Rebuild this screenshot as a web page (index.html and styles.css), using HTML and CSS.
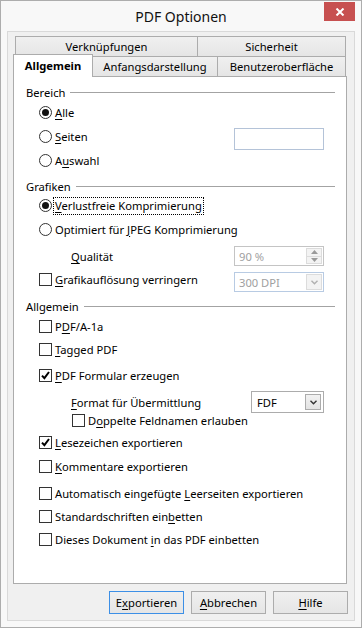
FILE: index.html
```html
<!DOCTYPE html>
<html lang="de">
<head>
	<meta charset="UTF-8">
	<title>PDF Optionen</title>
	<link rel="stylesheet" href="styles.css">
</head>
<body>
<div class="window">
	<div class="titlebar">
		<span class="title">PDF Optionen</span>
		<button class="close" type="button">
			<svg width="10" height="8" viewBox="0 0 10 8"><path d="M1.5 0.5L8.5 7.5M8.5 0.5L1.5 7.5" stroke="#fff" stroke-width="2"/></svg>
		</button>
	</div>

	<div class="client">
		<div class="tabrow back">
			<div class="tab w-verk">Verknüpfungen</div>
			<div class="tab w-sich">Sicherheit</div>
		</div>
		<div class="tabrow front">
			<div class="tab active w-allg">Allgemein</div>
			<div class="tab w-anf">Anfangsdarstellung</div>
			<div class="tab w-ben">Benutzeroberfläche</div>
		</div>

		<div class="panel">
			<!-- Bereich -->
			<div class="group first">Bereich</div>
			<div class="row ind"><span class="radio on"></span><span class="lbl"><u>A</u>lle</span></div>
			<div class="row ind"><span class="radio"></span><span class="lbl"><u>S</u>eiten</span><span class="field pages"></span></div>
			<div class="row ind"><span class="radio"></span><span class="lbl">A<u>u</u>swahl</span></div>

			<!-- Grafiken -->
			<div class="group">Grafiken</div>
			<div class="row h23 ind"><span class="radio on"></span><span class="lbl focus"><u>V</u>erlustfreie Komprimierung</span></div>
			<div class="row ind"><span class="radio"></span><span class="lbl">Optimiert für <u>J</u>PEG Komprimierung</span></div>
			<div class="row ind2 gap3">
				<span><u>Q</u>ualität</span>
				<span class="spin">
					<span class="val">90 %</span>
					<span class="spinbtns">
						<span class="sb"><svg width="7" height="4" viewBox="0 0 7 4"><path d="M0 4L3.5 0L7 4Z" fill="#9a9a9a"/></svg></span>
						<span class="sb"><svg width="7" height="4" viewBox="0 0 7 4"><path d="M0 0L3.5 4L7 0Z" fill="#9a9a9a"/></svg></span>
					</span>
				</span>
			</div>
			<div class="row ind gap2">
				<span class="check lift"></span><span class="lbl lift"><u>G</u>rafikauflösung verringern</span>
				<span class="combo disabled">
					<span class="val">300 DPI</span>
					<span class="drop"><svg width="7" height="5" viewBox="0 0 7 5"><path d="M0.5 0.8L3.5 3.8L6.5 0.8" stroke="#b0b0b0" stroke-width="1.4" fill="none"/></svg></span>
				</span>
			</div>

			<!-- Allgemein -->
			<div class="group gap4">Allgemein</div>
			<div class="row ind"><span class="check"></span><span class="lbl">P<u>D</u>F/A-1a</span></div>
			<div class="row h23 ind"><span class="check"></span><span class="lbl"><u>T</u>agged PDF</span></div>
			<div class="row ind gap2">
				<span class="check"><svg width="11" height="11" viewBox="0 0 11 11"><path d="M2 5.6L4.4 8.2L9 2" stroke="#000" stroke-width="2" fill="none"/></svg></span>
				<span class="lbl"><u>P</u>DF Formular erzeugen</span>
			</div>
			<div class="row ind2 gap3">
				<span><u>F</u>ormat für Übermittlung</span>
				<span class="combo fdf">
					<span class="val">FDF</span>
					<span class="drop"><svg width="7" height="5" viewBox="0 0 7 5"><path d="M0.5 0.8L3.5 3.8L6.5 0.8" stroke="#333" stroke-width="1.4" fill="none"/></svg></span>
				</span>
			</div>
			<div class="row h13 ind3"><span class="check"></span><span class="lbl">D<u>o</u>ppelte Feldnamen erlauben</span></div>
			<div class="row ind gap3">
				<span class="check"><svg width="11" height="11" viewBox="0 0 11 11"><path d="M2 5.6L4.4 8.2L9 2" stroke="#000" stroke-width="2" fill="none"/></svg></span>
				<span class="lbl"><u>L</u>esezeichen exportieren</span>
			</div>
			<div class="row ind"><span class="check"></span><span class="lbl"><u>K</u>ommentare exportieren</span></div>
			<div class="row ind gap3"><span class="check"></span><span class="lbl">Automatisch eingefügte <u>L</u>eerseiten exportieren</span></div>
			<div class="row h23 ind"><span class="check"></span><span class="lbl">Standardschriften ein<u>b</u>etten</span></div>
			<div class="row h23 ind"><span class="check"></span><span class="lbl">Dieses Dokument <u>i</u>n das PDF einbetten</span></div>
		</div>

		<div class="buttons">
			<button class="btn default" type="button">E<u>x</u>portieren</button>
			<button class="btn" type="button"><u>A</u>bbrechen</button>
			<button class="btn" type="button"><u>H</u>ilfe</button>
		</div>
	</div>
</div>
</body>
</html>
```

FILE: styles.css
```css
* {
	box-sizing: border-box;
}

body {
	margin: 0;
	font-family: "Noto Sans", "DejaVu Sans", sans-serif;
	font-size: 11.2px;
	color: #000;
}

u {
	text-decoration-thickness: 1px;
	text-underline-offset: 2px;
}

/* window frame */
.window {
	width: 362px;
	height: 628px;
	border: 1px solid #adadad;
	background: #f8f8f8;
	display: flex;
	flex-direction: column;
}

.titlebar {
	height: 30px;
	display: grid;
	grid-template-columns: 1fr auto 1fr;
}

.title {
	grid-column: 2;
	align-self: center;
	font-size: 14px;
	color: #111;
}

.close {
	grid-column: 3;
	justify-self: end;
	align-self: start;
	width: 31px;
	height: 19px;
	margin: 1px 6px 0 0;
	padding: 0;
	border: 0;
	background: #c75050;
	display: flex;
	align-items: center;
	justify-content: center;
}

.client {
	flex: 1;
	margin: 0 6px 6px;
	border: 1px solid #d9d9d9;
	background: #f0f0f0;
	padding: 4px 7px 0 5px;
	display: flex;
	flex-direction: column;
}

/* tabs */
.tabrow {
	display: flex;
	height: 20px;
}

.tabrow.back {
	margin-left: 2px;
}

.tab {
	border: 1px solid #acacac;
	border-bottom: 0;
	background: linear-gradient(#f0f0f0, #e5e5e5);
	display: flex;
	align-items: center;
	justify-content: center;
	padding-bottom: 1px;
}

.tab + .tab {
	margin-left: -1px;
}

.tab.active {
	height: 23px;
	margin: -2px 0 -1px;
	background: #fff;
	font-weight: bold;
	position: relative;
	z-index: 1;
}

.w-verk { width: 183px; }
.w-sich { width: 149px; }
.w-allg { width: 80px; }
.w-anf  { width: 126px; }
.w-ben  { width: 129px; }

/* page */
.panel {
	height: 508px;
	background: #fff;
	border: 1px solid #acacac;
	padding: 0 11px 0 12px;
	display: flex;
	flex-direction: column;
}

.group {
	height: 16px;
	margin-top: 6px;
	display: flex;
	align-items: center;
}

.group.first { margin-top: 7px; }
.group.gap4 { margin-top: 4px; }

.group::after {
	content: "";
	flex: 1;
	height: 1px;
	margin-left: 5px;
	background: #a3a3a3;
}

.row {
	height: 24px;
	display: flex;
	align-items: center;
}

.row.h23 { height: 23px; }
.row.h13 { height: 13px; }
.row.gap2 { margin-top: 2px; }
.row.gap3 { margin-top: 3px; }

.ind  { padding-left: 13px; }
.ind2 { padding-left: 45px; }
.ind3 { padding-left: 46px; }

.lbl {
	margin-left: 3px;
}

.lift {
	margin-bottom: 6px;
}

.focus {
	outline: 1px dotted #000;
	padding: 0 1px;
	margin-left: 2px;
	line-height: 16px;
}

.radio {
	width: 13px;
	height: 13px;
	border: 1px solid #333;
	border-radius: 50%;
	background: #fff;
	display: flex;
	align-items: center;
	justify-content: center;
	flex: none;
}

.radio.on::after {
	content: "";
	width: 7px;
	height: 7px;
	border-radius: 50%;
	background: #111;
}

.check {
	width: 13px;
	height: 13px;
	border: 1px solid #333;
	background: #fff;
	display: flex;
	align-items: center;
	justify-content: center;
	flex: none;
}

/* inputs on the right */
.field,
.spin,
.combo {
	margin-left: auto;
	margin-right: 11px;
	background: #fff;
	display: flex;
	align-items: center;
}

.field.pages {
	width: 90px;
	height: 22px;
	margin-top: 6px;
	border: 1px solid #b4c3d8;
}

.spin {
	width: 90px;
	height: 20px;
	border: 1px solid #c4c4c4;
	padding: 1px;
}

.val {
	flex: 1;
	padding-left: 3px;
}

.spin .val,
.combo.disabled .val {
	color: #a0a0a0;
}

.spinbtns {
	width: 16px;
	height: 16px;
	display: flex;
	flex-direction: column;
}

.sb {
	flex: 1;
	border: 1px solid #dcdcdc;
	background: #f3f3f3;
	display: flex;
	align-items: center;
	justify-content: center;
}

.sb + .sb {
	border-top: 0;
}

.combo {
	height: 20px;
	padding: 1px;
}

.combo.disabled {
	width: 90px;
	border: 1px solid #b8cbe3;
}

.combo.fdf {
	width: 73px;
	height: 22px;
	border: 1px solid #acacac;
	padding: 2px;
}

.drop {
	width: 16px;
	height: 100%;
	display: flex;
	align-items: center;
	justify-content: center;
	border: 1px solid #dcdcdc;
	background: #f3f3f3;
}

.combo.fdf .drop {
	border-color: #acacac;
	background: linear-gradient(#f2f2f2, #e3e3e3);
}

/* dialog buttons */
.buttons {
	margin: 7px -1px 0 0;
	display: flex;
	justify-content: flex-end;
	gap: 7px;
}

.btn {
	width: 75px;
	height: 23px;
	padding: 0 0 1px;
	border: 1px solid #acacac;
	background: linear-gradient(#f0f0f0, #e5e5e5);
	font-family: inherit;
	font-size: 11.2px;
	color: #000;
}

.btn.default {
	border-color: #3c8fe6;
}
```
